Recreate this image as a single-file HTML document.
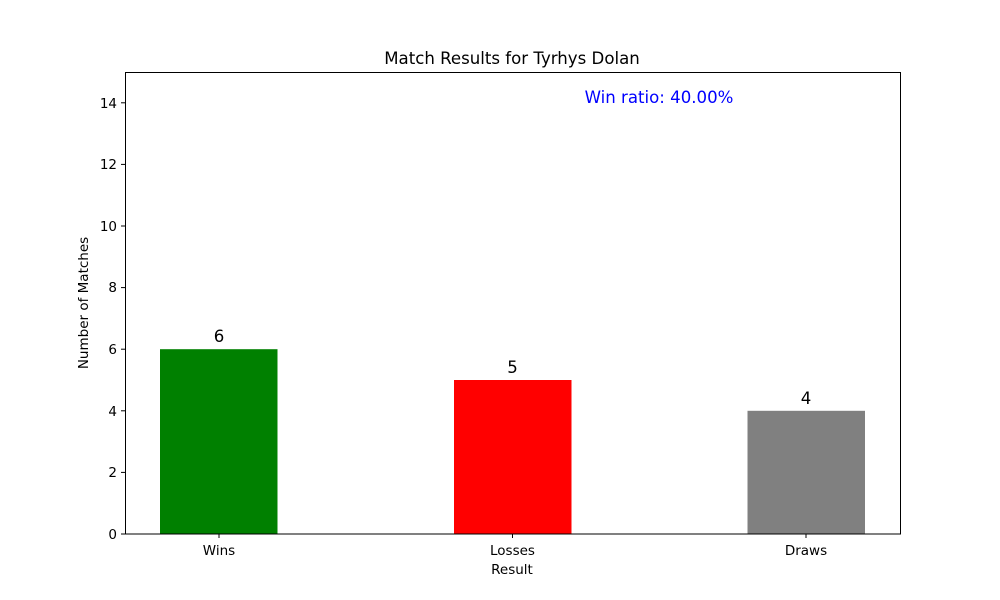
<!DOCTYPE html>
<html><head><meta charset="utf-8"><style>body{margin:0;background:#fff}svg{display:block}text{font-family:"DejaVu Sans","Liberation Sans",sans-serif}</style></head>
<body>
<svg width="1000" height="600" xmlns="http://www.w3.org/2000/svg">
<rect width="1000" height="600" fill="#fff"/>
<rect x="160" y="349.2" width="117.5" height="184.8" fill="#008000"/>
<rect x="454" y="380" width="117.5" height="154" fill="#ff0000"/>
<rect x="747.5" y="410.8" width="117.5" height="123.2" fill="#808080"/>
<rect x="125.5" y="72.5" width="775" height="461.5" fill="none" stroke="#000" stroke-width="1"/>
<g stroke="#000" stroke-width="1">
<line x1="121" x2="125" y1="534" y2="534"/><line x1="121" x2="125" y1="472.4" y2="472.4"/>
<line x1="121" x2="125" y1="410.8" y2="410.8"/><line x1="121" x2="125" y1="349.2" y2="349.2"/>
<line x1="121" x2="125" y1="287.6" y2="287.6"/><line x1="121" x2="125" y1="226" y2="226"/>
<line x1="121" x2="125" y1="164.4" y2="164.4"/><line x1="121" x2="125" y1="102.8" y2="102.8"/>
<line x1="219" x2="219" y1="534" y2="538"/><line x1="512.5" x2="512.5" y1="534" y2="538"/><line x1="806" x2="806" y1="534" y2="538"/>
</g>
<g font-size="13.5" text-anchor="end">
<text x="117" y="539">0</text><text x="117" y="477">2</text><text x="117" y="416">4</text>
<text x="117" y="354">6</text><text x="117" y="292">8</text><text x="117" y="231">10</text>
<text x="117" y="169">12</text><text x="117" y="108">14</text>
</g>
<g font-size="13.5" text-anchor="middle">
<text x="219" y="555">Wins</text><text x="512.5" y="555">Losses</text><text x="806" y="555">Draws</text>
<text x="512" y="574">Result</text>
<text transform="translate(88,303) rotate(-90)">Number of Matches</text>
</g>
<g font-size="16.6" text-anchor="middle">
<text x="219" y="342">6</text><text x="512.5" y="373">5</text><text x="806" y="404">4</text>
</g>
<text x="512" y="64" font-size="16.6" text-anchor="middle">Match Results for Tyrhys Dolan</text>
<text x="659" y="103" font-size="16.6" fill="#0000ff" text-anchor="middle">Win ratio: 40.00%</text>
</svg>
</body></html>
